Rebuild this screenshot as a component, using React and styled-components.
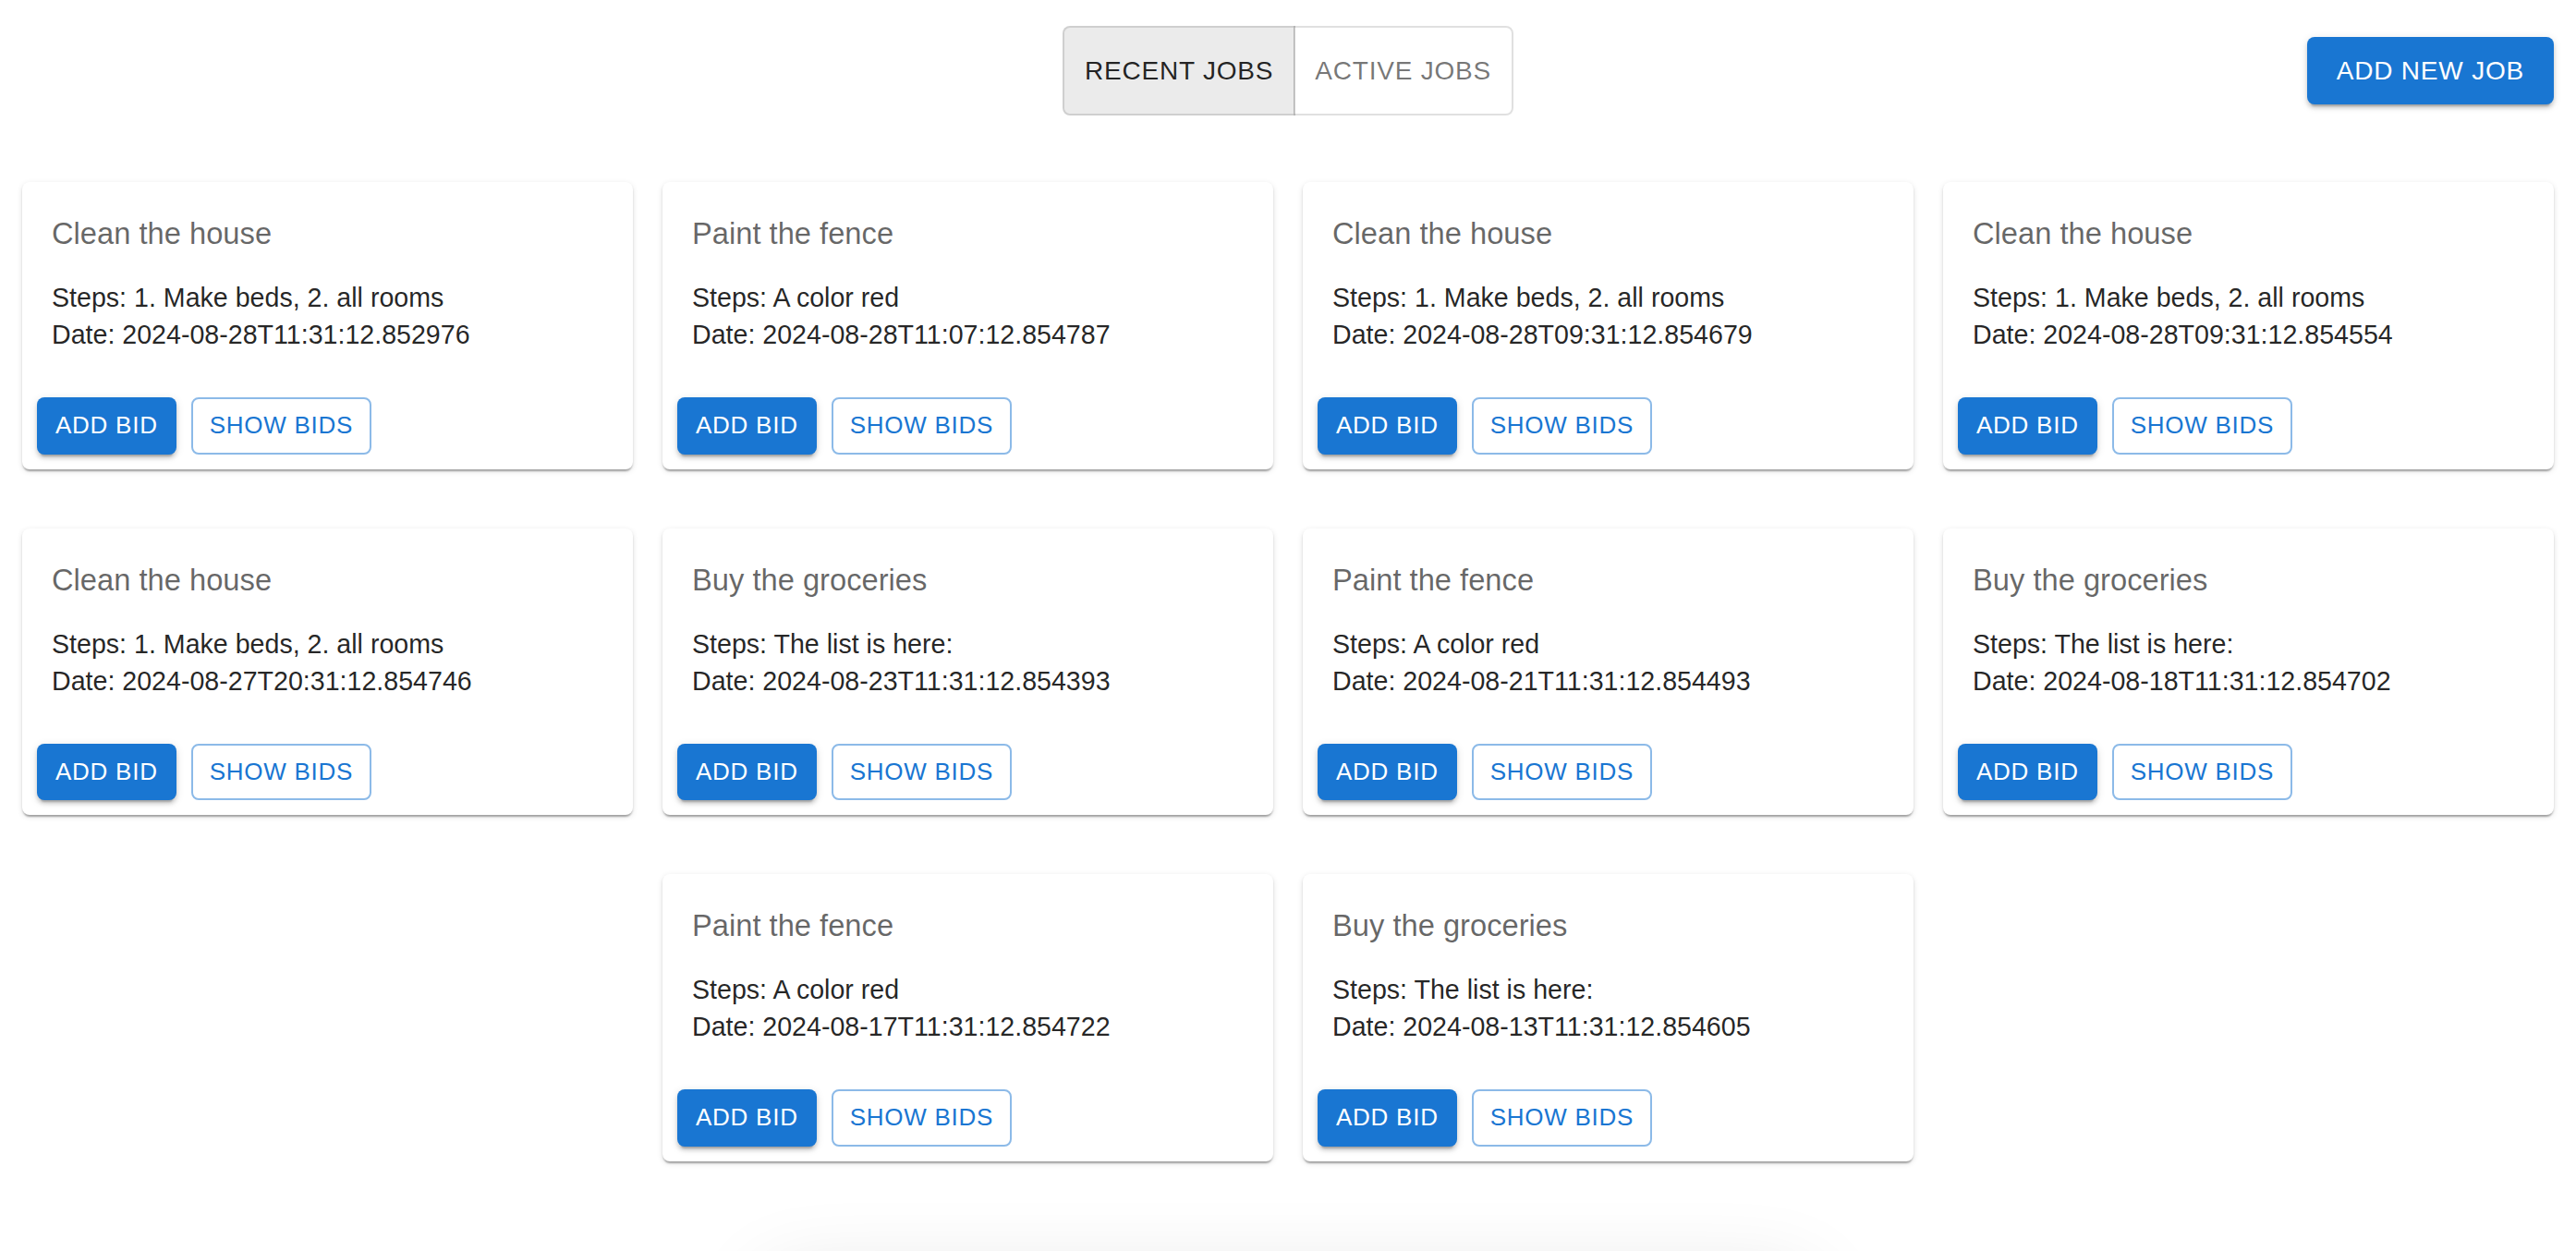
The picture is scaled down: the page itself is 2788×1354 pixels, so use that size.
import styled, { createGlobalStyle } from "styled-components";

const GlobalStyle = createGlobalStyle`
  html, body {
    margin: 0;
    padding: 0;
    background: #ffffff;
  }
  body {
    font-family: "Liberation Sans", Arial, Helvetica, sans-serif;
    color: rgba(0, 0, 0, 0.87);
  }
`;

const Page = styled.div`
  height: 100vh;
  overflow: hidden;
  box-sizing: border-box;
  padding: 28px 24px 0;
`;

const Header = styled.div`
  display: grid;
  grid-template-columns: 1fr auto 1fr;
  align-items: center;
`;

const ToggleGroup = styled.div`
  grid-column: 2;
  display: inline-flex;
  border-radius: 8px;
`;

const Toggle = styled.button`
  font-family: inherit;
  font-size: 28px;
  font-weight: 400;
  line-height: 1.75;
  letter-spacing: 0.02857em;
  text-transform: uppercase;
  padding: 22px;
  border: 2px solid rgba(0, 0, 0, 0.12);
  background: ${({ $selected }) => ($selected ? "rgba(0, 0, 0, 0.08)" : "transparent")};
  color: ${({ $selected }) => ($selected ? "rgba(0, 0, 0, 0.87)" : "rgba(0, 0, 0, 0.54)")};
  cursor: pointer;

  &:first-child {
    border-radius: 8px 0 0 8px;
  }
  &:last-child {
    margin-left: -2px;
    border-left-width: 1px;
    border-radius: 0 8px 8px 0;
  }
`;

const Button = styled.button`
  font-family: inherit;
  font-weight: 400;
  letter-spacing: 0.02857em;
  text-transform: uppercase;
  border-radius: 8px;
  cursor: pointer;
  white-space: nowrap;
  font-size: ${({ $size }) => ($size === "small" ? "26px" : "28px")};
  line-height: 1.75;
  ${({ $variant, $size }) =>
    $variant === "outlined"
      ? `
    padding: ${$size === "small" ? "6px 18px" : "10px 30px"};
    background: transparent;
    color: #1976d2;
    border: 2px solid rgba(25, 118, 210, 0.5);
  `
      : `
    padding: ${$size === "small" ? "8px 20px" : "12px 32px"};
    background: #1976d2;
    color: #ffffff;
    border: none;
    box-shadow: 0 6px 2px -4px rgba(0, 0, 0, 0.2), 0 4px 4px 0 rgba(0, 0, 0, 0.14),
      0 2px 10px 0 rgba(0, 0, 0, 0.12);
  `}
`;

const AddJob = styled(Button)`
  grid-column: 3;
  justify-self: end;
`;

const Grid = styled.div`
  margin-top: 72px;
  display: flex;
  flex-wrap: wrap;
  justify-content: center;
  column-gap: 32px;
  row-gap: 64px;
`;

const Card = styled.div`
  flex: 0 0 calc((100% - 96px) / 4);
  background: #ffffff;
  border-radius: 8px;
  box-shadow: 0 4px 2px -2px rgba(0, 0, 0, 0.2), 0 2px 2px 0 rgba(0, 0, 0, 0.14),
    0 2px 6px 0 rgba(0, 0, 0, 0.12);
  overflow: hidden;
`;

const CardContent = styled.div`
  padding: 32px;
`;

const Title = styled.div`
  font-size: 32.7px;
  line-height: 48px;
  color: rgba(0, 0, 0, 0.6);
  margin-bottom: 25px;
`;

const Body = styled.div`
  font-size: 28.6px;
  line-height: 40px;
  color: rgba(0, 0, 0, 0.87);
`;

const CardActions = styled.div`
  display: flex;
  align-items: center;
  gap: 16px;
  padding: 16px;
`;

const Footer = styled.div`
  width: 1100px;
  height: 200px;
  margin: 124px auto 0;
  background: #ffffff;
  border-radius: 8px;
  box-shadow: 0 22px 30px -14px rgba(0, 0, 0, 0.2), 0 48px 76px 6px rgba(0, 0, 0, 0.14),
    0 18px 92px 16px rgba(0, 0, 0, 0.12);
`;

const jobs = [
  { title: "Clean the house", steps: "1. Make beds, 2. all rooms", date: "2024-08-28T11:31:12.852976" },
  { title: "Paint the fence", steps: "A color red", date: "2024-08-28T11:07:12.854787" },
  { title: "Clean the house", steps: "1. Make beds, 2. all rooms", date: "2024-08-28T09:31:12.854679" },
  { title: "Clean the house", steps: "1. Make beds, 2. all rooms", date: "2024-08-28T09:31:12.854554" },
  { title: "Clean the house", steps: "1. Make beds, 2. all rooms", date: "2024-08-27T20:31:12.854746" },
  { title: "Buy the groceries", steps: "The list is here:", date: "2024-08-23T11:31:12.854393" },
  { title: "Paint the fence", steps: "A color red", date: "2024-08-21T11:31:12.854493" },
  { title: "Buy the groceries", steps: "The list is here:", date: "2024-08-18T11:31:12.854702" },
  { title: "Paint the fence", steps: "A color red", date: "2024-08-17T11:31:12.854722" },
  { title: "Buy the groceries", steps: "The list is here:", date: "2024-08-13T11:31:12.854605" },
];

export default function App() {
  return (
    <>
      <GlobalStyle />
      <Page>
        <Header>
          <ToggleGroup>
            <Toggle $selected>Recent Jobs</Toggle>
            <Toggle>Active Jobs</Toggle>
          </ToggleGroup>
          <AddJob>Add New Job</AddJob>
        </Header>

        <Grid>
          {jobs.map((job, i) => (
            <Card key={i}>
              <CardContent>
                <Title>{job.title}</Title>
                <Body>Steps: {job.steps}</Body>
                <Body>Date: {job.date}</Body>
              </CardContent>
              <CardActions>
                <Button $size="small">Add Bid</Button>
                <Button $size="small" $variant="outlined">
                  Show Bids
                </Button>
              </CardActions>
            </Card>
          ))}
        </Grid>
        <Footer />
      </Page>
    </>
  );
}
